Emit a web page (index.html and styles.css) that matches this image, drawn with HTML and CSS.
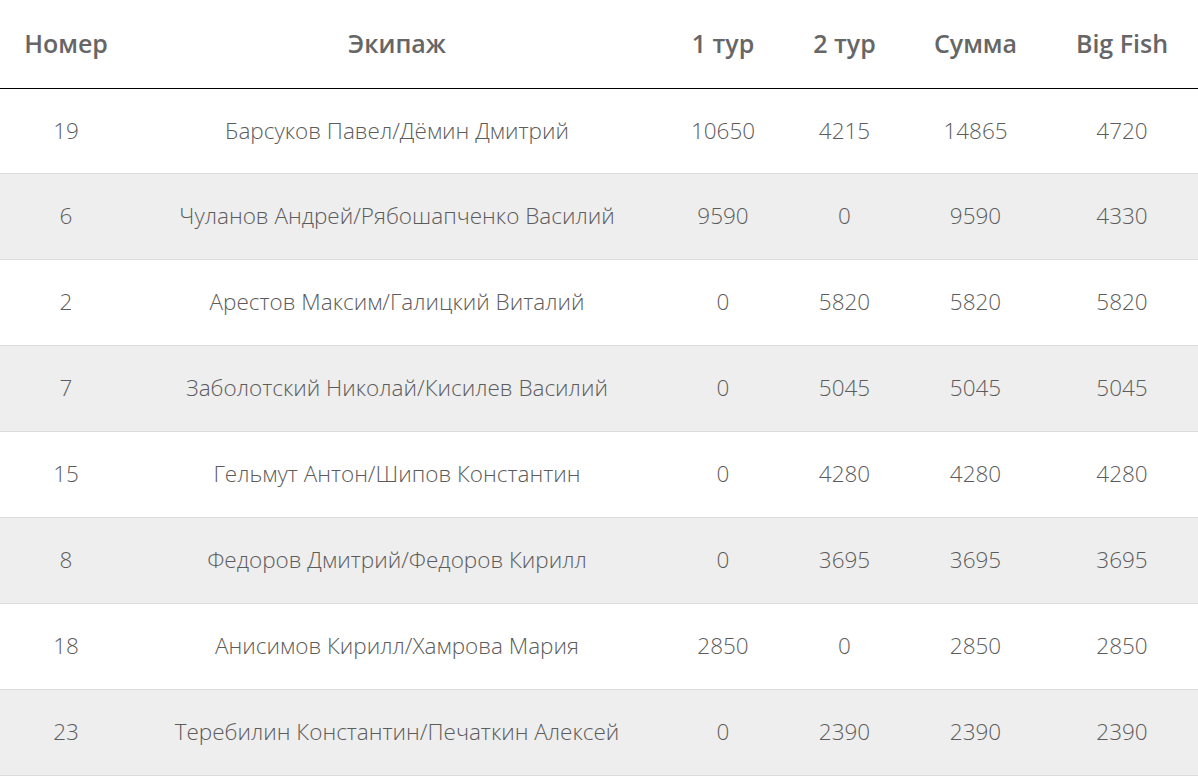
FILE: index.html
```html
<!DOCTYPE html>
<html lang="ru">
<head>
<meta charset="utf-8">
<title>Результаты</title>
<link rel="stylesheet" href="styles.css">
</head>
<body>
<table class="results">
  <colgroup>
    <col class="c-num"><col class="c-crew"><col class="c-t1"><col class="c-t2"><col class="c-sum"><col class="c-big">
  </colgroup>
  <thead>
    <tr><th>Номер</th><th>Экипаж</th><th>1 тур</th><th>2 тур</th><th>Сумма</th><th>Big Fish</th></tr>
  </thead>
  <tbody>
    <tr><td>19</td><td>Барсуков Павел/Дёмин Дмитрий</td><td>10650</td><td>4215</td><td>14865</td><td>4720</td></tr>
    <tr><td>6</td><td>Чуланов Андрей/Рябошапченко Василий</td><td>9590</td><td>0</td><td>9590</td><td>4330</td></tr>
    <tr><td>2</td><td>Арестов Максим/Галицкий Виталий</td><td>0</td><td>5820</td><td>5820</td><td>5820</td></tr>
    <tr><td>7</td><td>Заболотский Николай/Кисилев Василий</td><td>0</td><td>5045</td><td>5045</td><td>5045</td></tr>
    <tr><td>15</td><td>Гельмут Антон/Шипов Константин</td><td>0</td><td>4280</td><td>4280</td><td>4280</td></tr>
    <tr><td>8</td><td>Федоров Дмитрий/Федоров Кирилл</td><td>0</td><td>3695</td><td>3695</td><td>3695</td></tr>
    <tr><td>18</td><td>Анисимов Кирилл/Хамрова Мария</td><td>2850</td><td>0</td><td>2850</td><td>2850</td></tr>
    <tr><td>23</td><td>Теребилин Константин/Печаткин Алексей</td><td>0</td><td>2390</td><td>2390</td><td>2390</td></tr>
  </tbody>
</table>
</body>
</html>
```

FILE: styles.css
```css
html, body {
  margin: 0;
  padding: 0;
  background: #fff;
}
body {
  font-family: "Open Sans", "Liberation Sans", sans-serif;
  color: #555;
}
.results {
  width: 1198px;
  border-collapse: collapse;
  table-layout: fixed;
}
.c-num { width: 132px; }
.c-crew { width: 530px; }
.c-t1 { width: 122px; }
.c-t2 { width: 121px; }
.c-sum { width: 141px; }
.c-big { width: 152px; }
.results th {
  height: 88px;
  padding: 0 0 2px;
  box-sizing: border-box;
  font-size: 25px;
  font-weight: 600;
  color: #666;
  text-align: center;
  vertical-align: middle;
  border-bottom: 1px solid #000;
}
.results td {
  height: 86px;
  padding: 0 0 2px;
  box-sizing: border-box;
  font-size: 22.5px;
  font-weight: 300;
  color: #5c5c5c;
  text-align: center;
  vertical-align: middle;
  border-bottom: 1px solid #dcdcdc;
}
.results tbody tr:first-child td {
  height: 85px;
  padding-bottom: 0;
}
.results tbody tr:nth-child(even) td {
  background: #eeeeee;
}
```
